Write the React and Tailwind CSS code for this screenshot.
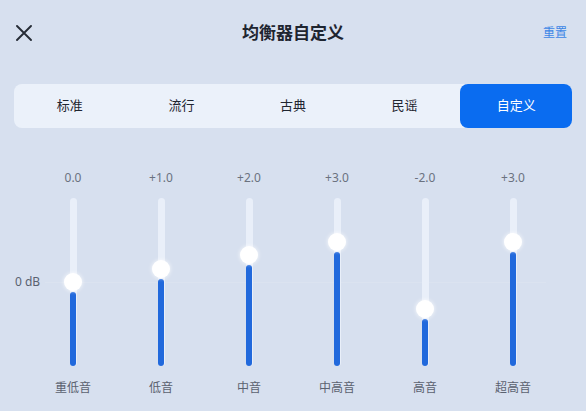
const tabs = ['标准', '流行', '古典', '民谣', '自定义'];

const bands = [
  { label: '重低音', value: 0 },
  { label: '低音', value: 1 },
  { label: '中音', value: 2 },
  { label: '中高音', value: 3 },
  { label: '高音', value: -2 },
  { label: '超高音', value: 3 },
];

const fmt = (v) => (v > 0 ? `+${v.toFixed(1)}` : v.toFixed(1));

const Slider = ({ value }) => {
  // 0 dB sits at 84px from the top of the track, ~13.3px per dB
  const knobY = 84 - value * 13.3;
  return (
    <div className="relative w-[7px] h-[168px] rounded-full bg-[#e9eff9]">
      <div
        className="absolute left-[0.5px] w-[6px] bottom-0 rounded-full bg-[#2169dc]"
        style={{ top: knobY + 10 }}
      />
      <div
        className="absolute left-1/2 w-[18px] h-[18px] -ml-[9px] rounded-full bg-white shadow-[0_0_4px_rgba(255,255,255,0.9)]"
        style={{ top: knobY - 9 }}
      />
    </div>
  );
};

const App = () => {
  return (
    <div
      className="w-[586px] h-[411px] overflow-hidden bg-[#d7e0ef] text-[#1f2937]"
      style={{ fontFamily: '"Noto Sans", "Noto Sans CJK SC", sans-serif' }}
    >
      {/* Header */}
      <div className="h-[66px] flex items-center justify-between">
        <div className="w-[80px] pl-[16px] flex items-center">
          <svg width="16" height="16" viewBox="0 0 16 16" fill="none" stroke="#262c36" strokeWidth="1.9" strokeLinecap="round">
            <path d="M1 1 15 15M15 1 1 15" />
          </svg>
        </div>
        <h1 className="text-[17px] font-semibold text-[#1e2530]">均衡器自定义</h1>
        <div className="w-[80px] pr-[19px] text-right text-[12px] text-[#3d86e6]">重置</div>
      </div>

      {/* Presets */}
      <div className="mx-[14px] mt-[18px] h-[44px] rounded-lg bg-[#ebf1fa] grid grid-cols-5">
        {tabs.map((t, i) => (
          <button
            key={t}
            className={
              i === tabs.length - 1
                ? 'rounded-lg bg-[#0a6cf0] text-white text-[13px]'
                : 'text-[13px] text-[#1f2530]'
            }
          >
            {t}
          </button>
        ))}
      </div>

      {/* Bands */}
      <div className="relative mt-[42px] px-[29px] grid grid-cols-6">
        <div className="absolute left-[45px] right-[40px] top-[112px] h-px bg-[#dbe3f0]" />
        <span className="absolute left-[15px] top-[103px] text-[12px] text-[#5a6270]">0 dB</span>
        {bands.map((b) => (
          <div key={b.label} className="relative flex flex-col items-center">
            <span className="h-[16px] leading-[16px] text-[12px] text-[#6b7280]">{fmt(b.value)}</span>
            <div className="mt-[12px]">
              <Slider value={b.value} />
            </div>
            <span className="mt-[14px] h-[16px] leading-[16px] text-[12px] text-[#5b6270]">{b.label}</span>
          </div>
        ))}
      </div>
    </div>
  );
};

export default App;
